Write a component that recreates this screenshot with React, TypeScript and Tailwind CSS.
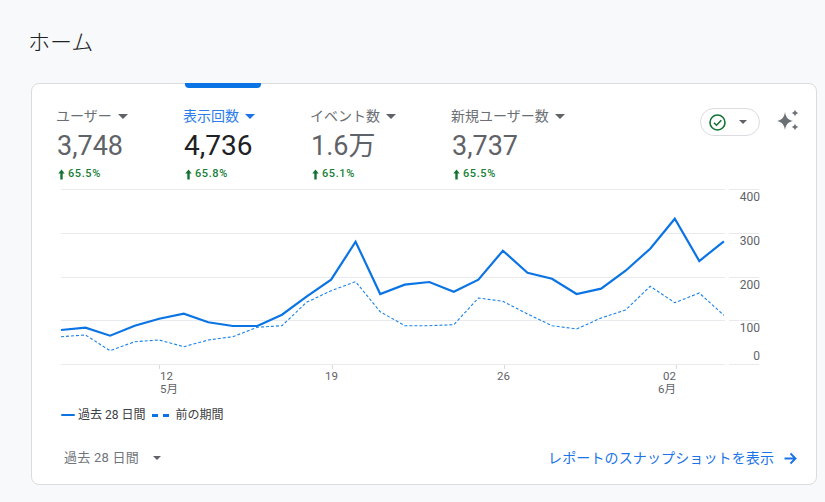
const solid = [330,327.7,335.7,325.7,318.7,313.7,322.3,326,326,314.7,296.7,279.7,241.7,294,284.7,282,291.7,279.7,250.7,272.7,278.7,294,288.7,270.7,248.7,218.7,261,241.3];
const prev = [336.7,335,350.7,341.7,340,346.7,340,336.7,327.3,325.7,302.3,290.7,281.7,311.7,325.7,325.7,324.7,298,301.3,314,325.7,329,318,310,286.3,302.7,293,315.3];
const pts = (a: number[]) => a.map((y, i) => `${(61 + i * 24.55).toFixed(1)},${y}`).join(" ");
const font = { fontFamily: "Roboto, 'Noto Sans CJK JP', sans-serif" };

function Caret({ color = "#5f6368", w = 10 }: { color?: string; w?: number }) {
  return (
    <svg width={w} height={w / 2} viewBox="0 0 10 5" className="shrink-0">
      <path d="M0 0h10L5 5z" fill={color} />
    </svg>
  );
}

function Metric({ label, value, delta, active, width }: { label: string; value: string; delta: string; active?: boolean; width: string }) {
  return (
    <div className={`relative ${width} shrink-0`}>
      {active && <div className="absolute -top-[23px] left-[1px] h-[5px] w-[76px] rounded-b-[4px] bg-[#0b74e5]" />}
      <div className={`flex h-[20px] items-center gap-[6px] text-[14px] ${active ? "text-[#2b7de9]" : "text-[#6b6f74]"}`}>
        <span className="ml-[-1px]">{label}</span>
        <Caret color={active ? "#1a73e8" : "#5f6368"} />
      </div>
      <div className={`mt-[2px] h-[36px] leading-[36px] ${active ? "text-[28px] text-[#202124]" : "text-[27px] text-[#5f6368]"}`}>{value}</div>
      <div className="mt-[2px] flex h-[16px] items-center gap-[3px] text-[11px] font-medium tracking-[0.6px] text-[#188038]">
        <svg width="7" height="11" viewBox="0 0 7 11" className="ml-[1px] shrink-0">
          <path d="M3.500 0.500 6.700 4.500H4.700V10.500H2.300V4.500H0.300z" fill="#137333" />
        </svg>
        <span>{delta}</span>
      </div>
    </div>
  );
}

export default function App() {
  return (
    <div className="h-[502px] w-[825px] overflow-hidden bg-[#f8f9fb] pl-[31px] pt-[28px]" style={font}>
      <h1 className="ml-[-3px] h-[55px] text-[22px] font-light leading-[30px] text-[#202124]">ホーム</h1>
      <div className="flex h-[402px] w-[786px] flex-col rounded-[8px] border border-[#dadce0] bg-white">
        <div className="flex h-[101px] shrink-0 pl-[25px] pt-[22px]">
          <Metric label="ユーザー" value="3,748" delta="65.5%" width="w-[127px]" />
          <Metric label="表示回数" value="4,736" delta="65.8%" active width="w-[127px]" />
          <Metric label="イベント数" value="1.6万" delta="65.1%" width="w-[141px]" />
          <Metric label="新規ユーザー数" value="3,737" delta="65.5%" width="w-[248px]" />
          <div className="mt-[2px] flex h-[28px] w-[60px] shrink-0 items-center rounded-full border border-[#dadce0] pl-[8px]">
            <svg width="17" height="17" viewBox="0 0 17 17" className="shrink-0">
              <circle cx="8.500" cy="8.500" r="7.500" fill="none" stroke="#137333" strokeWidth="1.600" />
              <path d="M5 8.700 7.500 11.200 12.300 6.200" fill="none" stroke="#137333" strokeWidth="1.600" />
            </svg>
            <span className="ml-[13px]"><Caret w={8} /></span>
          </div>
          <svg width="24" height="24" viewBox="0 0 24 24" className="ml-[16px] mt-[2px] shrink-0">
            <path d="M9 4C10 9.500 11.500 11.500 17 13 11.500 14.500 10 16.500 9 22 8 16.500 6.500 14.500 1 13 6.500 11.500 8 9.500 9 4z" fill="#6b7076" />
            <path d="M19 1.500c.4 2 1.300 3 3.500 3.500-2.200.5-3.100 1.500-3.500 3.500-.4-2-1.300-3-3.500-3.500 2.200-.5 3.100-1.500 3.500-3.500z" fill="#6b7076" />
            <path d="M19 15.500c.4 2 1.300 3 3.500 3.500-2.200.5-3.100 1.500-3.500 3.500-.4-2-1.300-3-3.500-3.500 2.200-.5 3.100-1.500 3.500-3.500z" fill="#6b7076" />
          </svg>
        </div>
        <svg width="784" height="220" viewBox="32 185 784 220" className="block shrink-0" fontFamily="Roboto, 'Noto Sans CJK JP', sans-serif">
          {[189.5, 233.5, 277.5, 320.5, 364.5].map((y) => (
            <g key={y} stroke="#e8eaed" strokeWidth="1">
              <line x1="61" x2="725" y1={y} y2={y} />
              <line x1="729" x2="759" y1={y} y2={y} />
            </g>
          ))}
          {[159.5, 332.5, 504.5, 676.5].map((x) => (
            <line key={x} x1={x} x2={x} y1="365" y2="369" stroke="#dadce0" />
          ))}
          <polyline points={pts(prev)} fill="none" stroke="#1a82e8" strokeWidth="1.100" strokeDasharray="3 2" />
          <polyline points={pts(solid)} fill="none" stroke="#0b74e5" strokeWidth="2.200" strokeLinejoin="miter" />
          <g fontSize="12" fill="#5f6368" textAnchor="end">
            <text x="760" y="201">400</text>
            <text x="760" y="245">300</text>
            <text x="760" y="289">200</text>
            <text x="760" y="332">100</text>
            <text x="760" y="360">0</text>
          </g>
          <g fontSize="11.500" fill="#5f6368">
            <text x="160" y="380">12</text>
            <text x="160" y="392.500">5月</text>
            <text x="325" y="380">19</text>
            <text x="497" y="380">26</text>
            <text x="663" y="380">02</text>
            <text x="658" y="392.500">6月</text>
          </g>
        </svg>
        <div className="flex h-[20px] shrink-0 items-center pl-[29px] text-[12px] text-[#3c4043]">
          <span className="h-[2px] w-[14px] rounded-full bg-[#0b74e5]" />
          <span className="ml-[3px]">過去 28 日間</span>
          <span className="ml-[7px] h-[3px] w-[6px] bg-[#0b74e5]" />
          <span className="ml-[5px] h-[3px] w-[6px] bg-[#0b74e5]" />
          <span className="ml-[6px]">前の期間</span>
        </div>
        <div className="flex flex-1 items-center justify-between pl-[32px] pr-[19px] pt-[7px]">
          <div className="flex items-center text-[13px] text-[#70757a]">
            <span className="tracking-[0.25px]">過去 28 日間</span>
            <span className="ml-[14px]"><Caret w={8} /></span>
          </div>
          <div className="flex items-center text-[14px] text-[#1a73e8]">
            <span className="tracking-[0.12px]">レポートのスナップショットを表示</span>
            <svg width="13" height="13" viewBox="0 0 13 13" className="ml-[10px] shrink-0">
              <path d="M0.500 6.500h11M6.500 1.500l5 5-5 5" fill="none" stroke="#1a73e8" strokeWidth="1.900" />
            </svg>
          </div>
        </div>
      </div>
    </div>
  );
}
